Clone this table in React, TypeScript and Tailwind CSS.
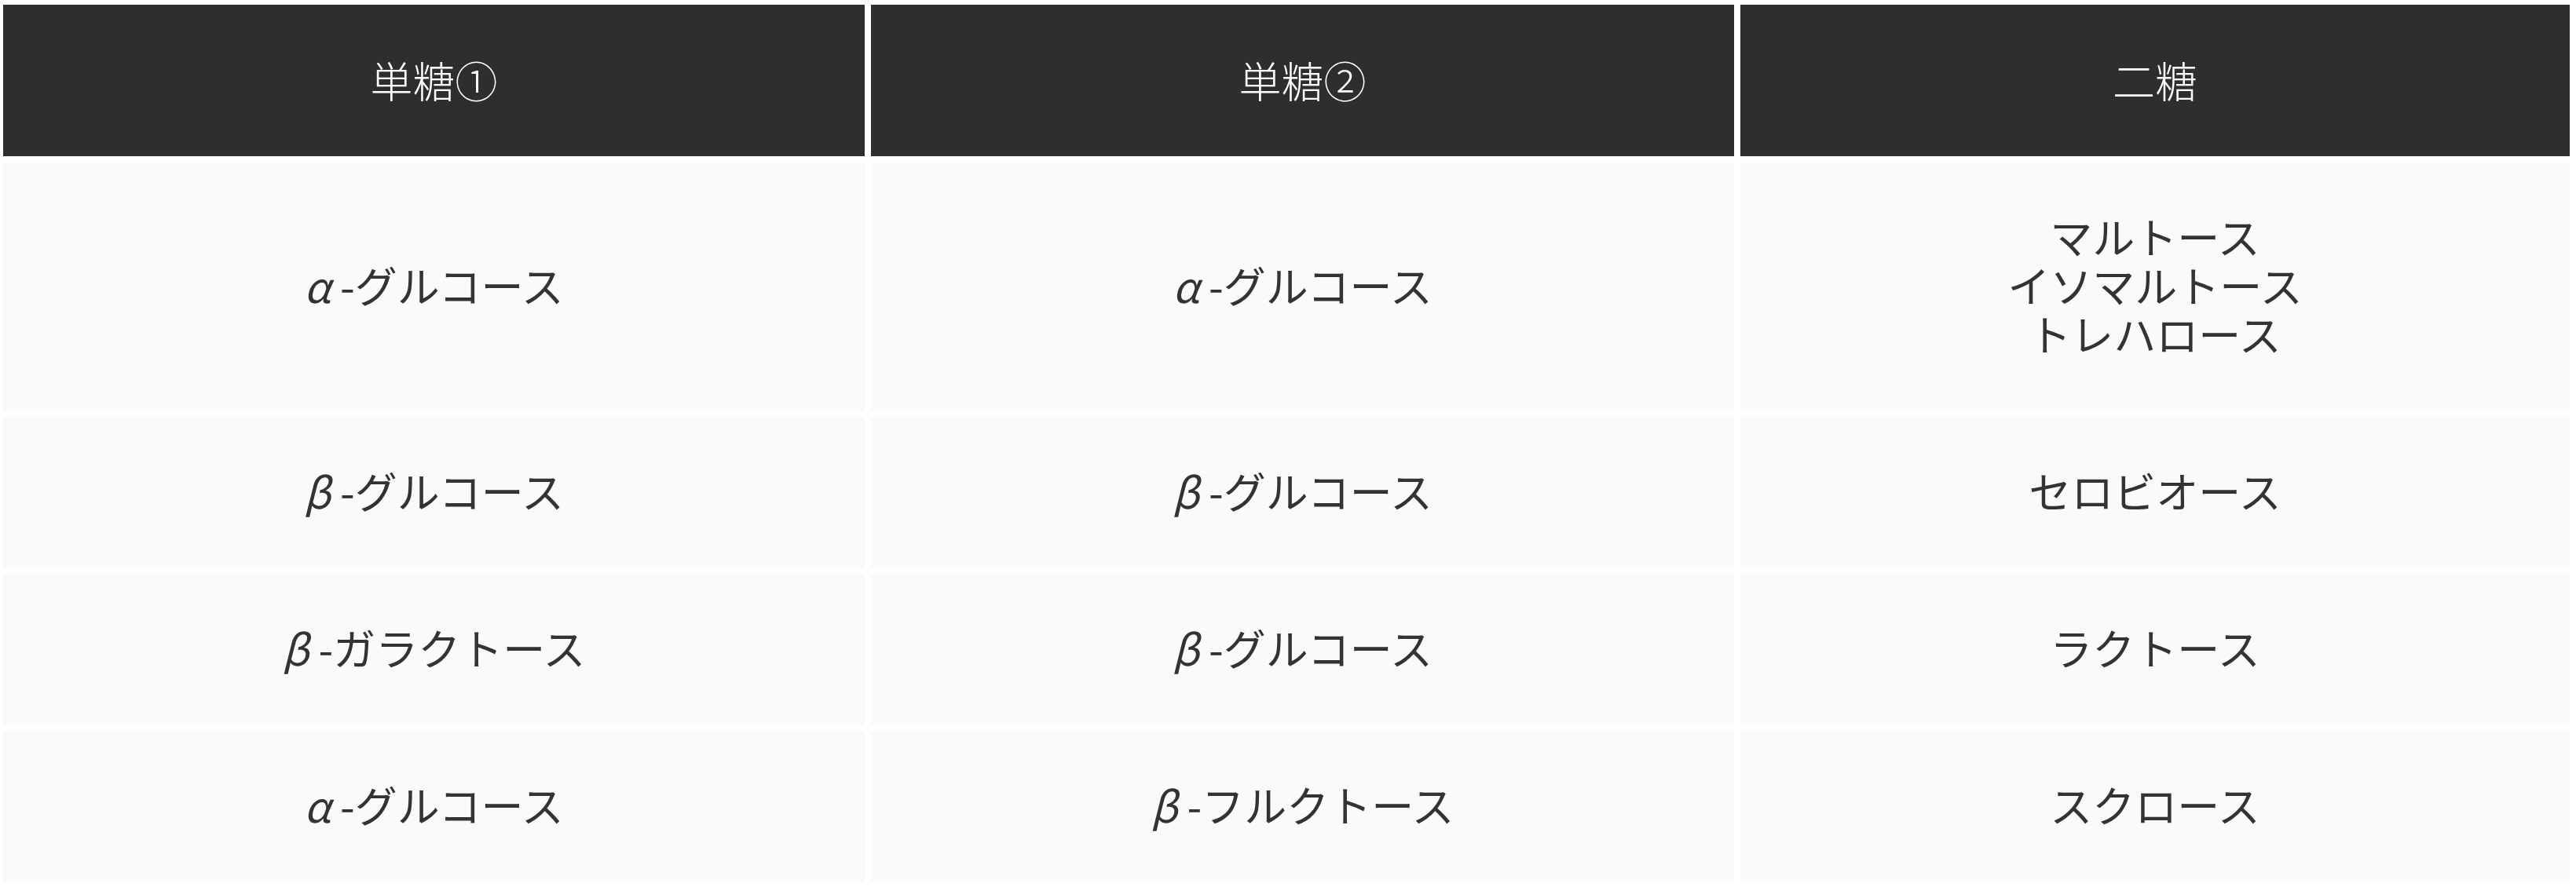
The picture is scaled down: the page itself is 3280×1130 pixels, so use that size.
import React from "react";

const font = {
  fontFamily: '"Noto Sans CJK JP", "Noto Sans", sans-serif',
};

function Greek({ ch }: { ch: string }) {
  return <span className="italic mr-[12px]">{ch}</span>;
}

const rows: React.ReactNode[][] = [
  [
    <><Greek ch="α" />-グルコース</>,
    <><Greek ch="α" />-グルコース</>,
    <>マルトース<br />イソマルトース<br />トレハロース</>,
  ],
  [
    <><Greek ch="β" />-グルコース</>,
    <><Greek ch="β" />-グルコース</>,
    <>セロビオース</>,
  ],
  [
    <><Greek ch="β" />-ガラクトース</>,
    <><Greek ch="β" />-グルコース</>,
    <>ラクトース</>,
  ],
  [
    <><Greek ch="α" />-グルコース</>,
    <><Greek ch="β" />-フルクトース</>,
    <>スクロース</>,
  ],
];

export default function App() {
  return (
    <div className="w-[3280px] h-[1130px] bg-white pl-[4px] pt-[6px]" style={font}>
      <div className="grid grid-cols-[1097px_1099px_1056px] grid-rows-[193px_316px_192px_192px_192px] gap-[8px]">
        {["単糖①", "単糖②", "二糖"].map((h) => (
          <div
            key={h}
            className="bg-[#2e2e2e] text-white flex items-center justify-center text-[54px] leading-[62px] font-light pb-[2px]"
          >
            {h}
          </div>
        ))}
        {rows.map((r, i) =>
          r.map((c, j) => (
            <div
              key={`${i}-${j}`}
              className="bg-[#fafafa] text-[#333333] flex items-center justify-center text-center text-[54px] leading-[62px] font-normal pb-[4px]"
            >
              <div>{c}</div>
            </div>
          ))
        )}
      </div>
    </div>
  );
}
